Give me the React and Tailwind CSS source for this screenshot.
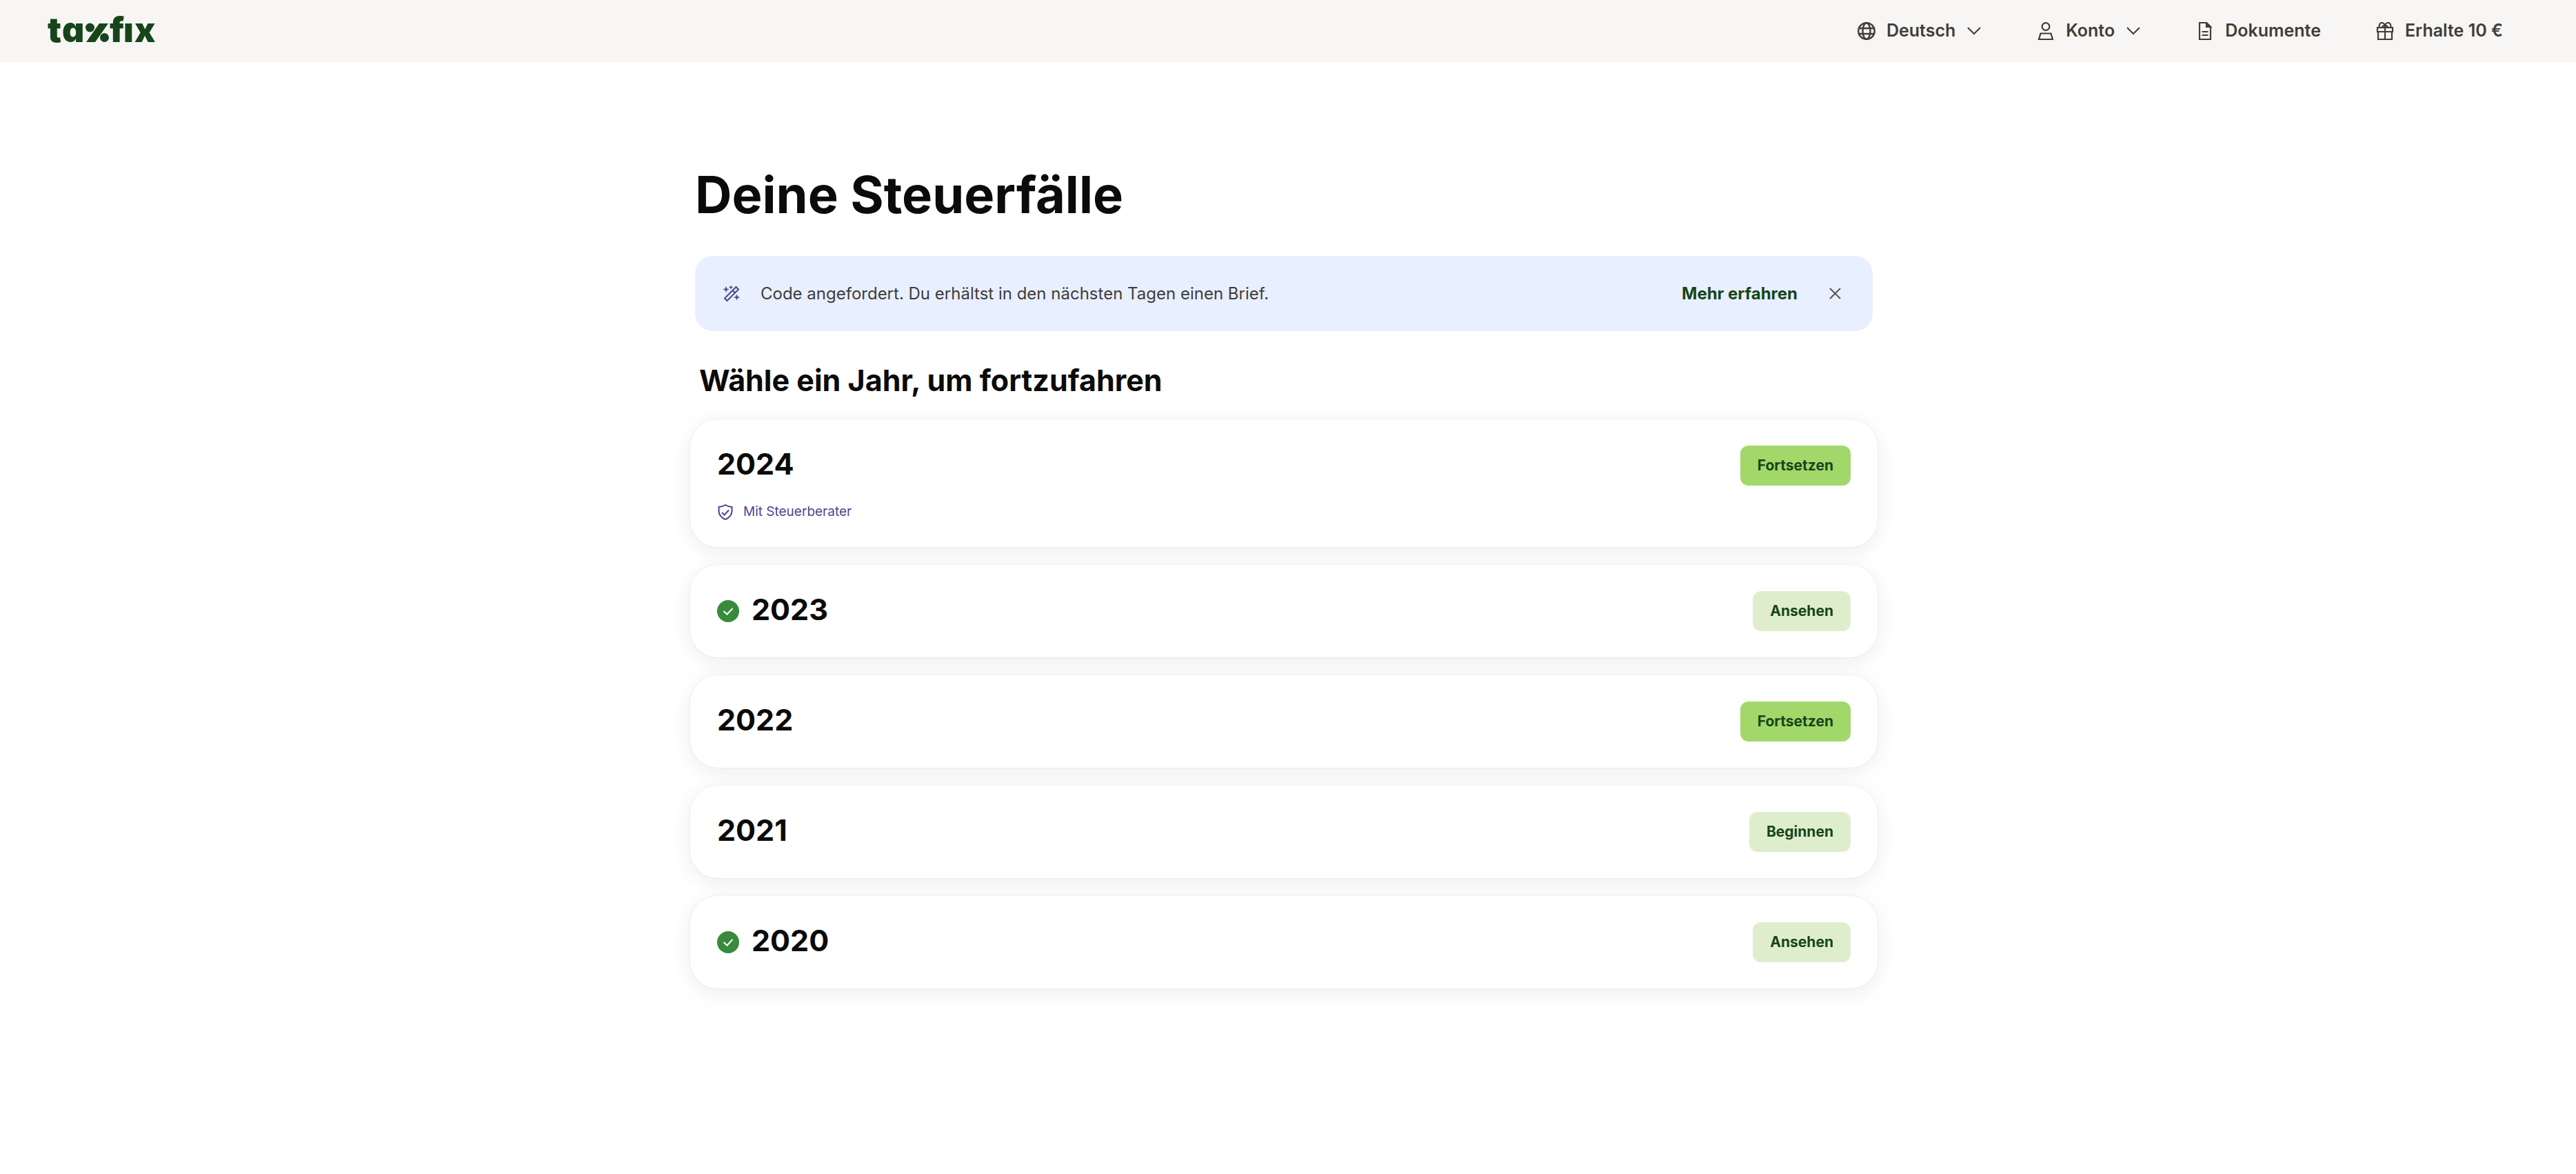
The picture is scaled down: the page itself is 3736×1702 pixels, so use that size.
const years = [
  { year: "2024", action: "Fortsetzen", primary: true, advisor: true },
  { year: "2023", action: "Ansehen", done: true },
  { year: "2022", action: "Fortsetzen", primary: true },
  { year: "2021", action: "Beginnen" },
  { year: "2020", action: "Ansehen", done: true },
];

export default function App() {
  return (
    <div className="min-h-screen bg-white font-['Inter',sans-serif] text-[#0b0b0a]">
      <Header />

      <main className="mx-auto flex max-w-[1734px] flex-col pt-[142px] pr-3 pb-20">
        <h1 className="px-[7px] text-[74px] leading-[100px] font-bold">Deine Steuerfälle</h1>

        <Banner />

        <h2 className="mt-[42px] px-[13px] text-[43px] leading-[58px] font-bold">
          Wähle ein Jahr, um fortzufahren
        </h2>

        <ul className="mt-7 flex flex-col gap-[26px]">
          {years.map((item) => (
            <YearCard key={item.year} {...item} />
          ))}
        </ul>
      </main>
    </div>
  );
}

function Header() {
  return (
    <header className="flex h-[90px] items-center justify-between bg-[#f8f6f4] pr-[106px] pl-[66px]">
      <a href="#" aria-label="taxfix">
        <Logo />
      </a>

      <nav className="flex items-center gap-20 text-[25px] font-semibold text-[#3f3d3b]">
        <button type="button" className="flex items-center gap-4">
          <GlobeIcon />
          Deutsch
          <ChevronIcon />
        </button>
        <button type="button" className="flex items-center gap-4">
          <PersonIcon />
          Konto
          <ChevronIcon />
        </button>
        <a href="#" className="flex items-center gap-4">
          <DocumentIcon />
          Dokumente
        </a>
        <a href="#" className="flex items-center gap-4">
          <GiftIcon />
          Erhalte 10 €
        </a>
      </nav>
    </header>
  );
}

function Banner() {
  return (
    <div className="mx-[7px] mt-[39px] flex h-[109px] items-center rounded-[26px] bg-[#e8efff] pr-[46px] pl-[41px]">
      <WandIcon />
      <p className="ml-[30px] flex-1 text-2xl text-[#3f3d3b]">
        Code angefordert. Du erhältst in den nächsten Tagen einen Brief.
      </p>
      <a href="#" className="text-2xl font-bold text-[#16451a]">
        Mehr erfahren
      </a>
      <button type="button" aria-label="Schließen" className="ml-[46px]">
        <svg width="17" height="17" viewBox="0 0 17 17" stroke="#575653" strokeWidth="2">
          <path d="M1 1l15 15M16 1L1 16" />
        </svg>
      </button>
    </div>
  );
}

function YearCard({ year, action, primary, done, advisor }) {
  return (
    <li className="rounded-[40px] bg-white px-[39px] py-[38px] shadow-[0_6px_30px_rgba(0,0,0,0.08),0_0_2px_rgba(0,0,0,0.1)]">
      <div className="flex items-center">
        {done && <DoneIcon />}
        <h3 className="flex-1 self-start text-[43px] leading-[52px] font-bold">{year}</h3>
        <button
          type="button"
          className={`h-[58px] rounded-xl px-[25px] text-[21px] font-bold text-[#16451a] ${
            primary ? "bg-[#a2d86a]" : "bg-[#deeecd]"
          }`}
        >
          {action}
        </button>
      </div>
      {advisor && (
        <p className="mt-6 flex items-center gap-[14px] text-[19px] leading-[27px] text-[#4b4694]">
          <ShieldIcon />
          Mit Steuerberater
        </p>
      )}
    </li>
  );
}

function Logo() {
  return (
    <svg
      width="170"
      height="76"
      viewBox="0 0 170 76"
      fill="#16451a"
      className="font-['Inter',sans-serif] text-[50px] font-black [font-feature-settings:'cv11']"
    >
      <text x="3" y="54">t</text>
      <text x="24" y="54">a</text>
      <circle cx="64.5" cy="33" r="6.5" />
      <circle cx="85.5" cy="47.5" r="6.5" />
      <path d="M78 27h13L72 54H59z" />
      <text x="93" y="54">f</text>
      <text x="113" y="54">ı</text>
      <text x="129" y="54">x</text>
    </svg>
  );
}

function GlobeIcon() {
  return (
    <svg width="26" height="26" viewBox="0 0 26 26" fill="none" stroke="currentColor" strokeWidth="2.4">
      <circle cx="13" cy="13" r="11.8" />
      <ellipse cx="13" cy="13" rx="5.5" ry="11.8" />
      <path d="M2 9h22M2 17h22" />
    </svg>
  );
}

function PersonIcon() {
  return (
    <svg width="26" height="26" viewBox="0 0 26 26" fill="none" stroke="currentColor" strokeWidth="2.2">
      <circle cx="13" cy="6.5" r="5.4" />
      <path d="M5.5 16.5h15l2.500 8.500H3z" />
    </svg>
  );
}

function DocumentIcon() {
  return (
    <svg width="26" height="26" viewBox="0 0 26 26" fill="none" stroke="currentColor" strokeWidth="2.2">
      <path d="M5 1h10l6 6v18H5z" />
      <path d="M15 1v6h6z" fill="currentColor" />
      <path d="M8.500 14h9M8.500 19h9" />
    </svg>
  );
}

function GiftIcon() {
  return (
    <svg width="26" height="26" viewBox="0 0 26 26" fill="none" stroke="currentColor" strokeWidth="2.2">
      <path d="M2 8h22v6H2zM3 14v11h20V14M13 8v17" />
      <path d="M13 8C13 3 11 1 8.500 1S4.500 3.500 4.500 8M13 8c0-5 2-7 4.500-7s4 2.500 4 7M9 8c0-2 2-3 4-3s4 1 4 3" />
    </svg>
  );
}

function ChevronIcon() {
  return (
    <svg width="20" height="12" viewBox="0 0 20 12" fill="none" stroke="currentColor" strokeWidth="2" className="mx-px">
      <path d="M1 1l9 9 9-9" />
    </svg>
  );
}

function WandIcon() {
  return (
    <svg width="24" height="24" viewBox="0 0 24 24" fill="none" stroke="#4b4694" strokeWidth="2">
      <path d="M2 18.500L18.500 2 22 5.500 5.500 22zM13.500 7l3.500 3.500" />
      <path
        d="M4 1.500l1 3 3 1-3 1-1 3-1-3-3-1 3-1zM11 0l.8 1.700 1.700.8-1.700.8L11 5l-.8-1.700-1.700-.8 1.700-.8zM19.500 13l1 3 3 1-3 1-1 3-1-3-3-1 3-1z"
        fill="#4b4694"
        strokeWidth="0.5"
      />
    </svg>
  );
}

function ShieldIcon() {
  return (
    <svg width="24" height="24" viewBox="0 0 24 24" fill="none" stroke="currentColor" strokeWidth="2">
      <path d="M12 2C9 4 6 5 2.500 5v5.500C2.500 16 6 20.500 12 23c6-2.500 9.500-7 9.500-12.500V5C18 5 15 4 12 2z" />
      <path d="M7 13l3.500 3.500L17 9.500" />
    </svg>
  );
}

function DoneIcon() {
  return (
    <svg width="32" height="32" viewBox="0 0 32 32" fill="none" className="mr-[18px]">
      <circle cx="16" cy="16" r="16" fill="#388a3c" />
      <path d="M9.500 16l5 4.500 8-8.500" stroke="#fff" strokeWidth="2" />
    </svg>
  );
}
